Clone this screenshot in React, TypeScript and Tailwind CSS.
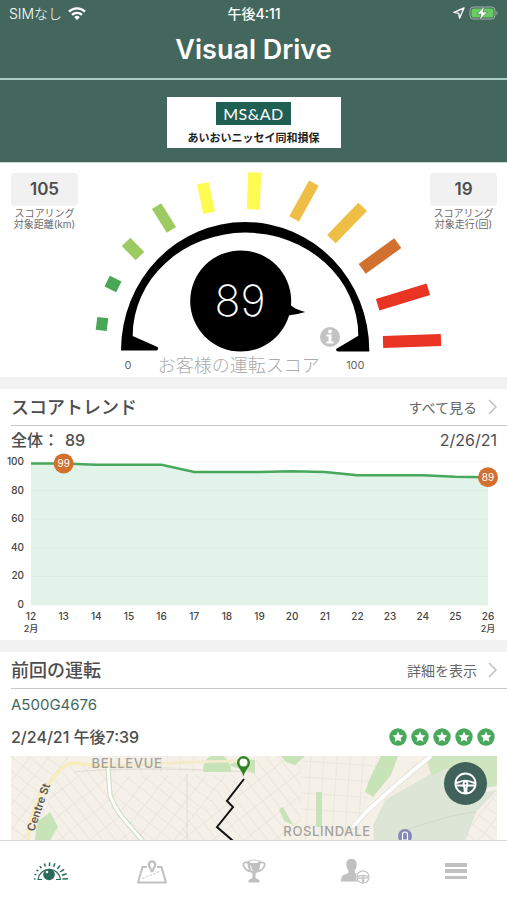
import type { ReactNode } from 'react'

const TICKS = [
  { cx: 102, cy: 324, len: 11, w: 13, rot: 7, color: '#4aa657' },
  { cx: 113, cy: 284, len: 13, w: 12, rot: 26, color: '#4aa657' },
  { cx: 133, cy: 249, len: 20, w: 12, rot: 46, color: '#9dcb62' },
  { cx: 164, cy: 218, len: 28, w: 11, rot: 58, color: '#9dcb62' },
  { cx: 206, cy: 198, len: 30, w: 12, rot: 78, color: '#fdfb52' },
  { cx: 254, cy: 191, len: 37, w: 13, rot: 92, color: '#fdfb52' },
  { cx: 304, cy: 201, len: 41, w: 11, rot: 119, color: '#efbe45' },
  { cx: 347, cy: 223, len: 45, w: 12, rot: 134, color: '#efbe45' },
  { cx: 380, cy: 256, len: 44, w: 12, rot: -36, color: '#d2712f' },
  { cx: 403, cy: 297, len: 53, w: 12, rot: -17, color: '#e93323' },
  { cx: 412, cy: 341, len: 58, w: 12, rot: -2, color: '#e93323' },
]

const TREND = [
  { day: 12, score: 99 },
  { day: 13, score: 99 },
  { day: 14, score: 98 },
  { day: 15, score: 98 },
  { day: 16, score: 98 },
  { day: 17, score: 93 },
  { day: 18, score: 93 },
  { day: 19, score: 93 },
  { day: 20, score: 93.6 },
  { day: 21, score: 93 },
  { day: 22, score: 90.7 },
  { day: 23, score: 90.7 },
  { day: 24, score: 90.7 },
  { day: 25, score: 89.6 },
  { day: 26, score: 89.3 },
]

const CHART = { left: 31, right: 488, top: 10, bottom: 153 }

export default function App() {
  return (
    <div className="flex h-dvh flex-col bg-white font-['Inter','Noto_Sans_CJK_JP',sans-serif] text-[#4d4d4d]">
      <Header />
      <main className="min-h-0 flex-1 overflow-y-auto bg-[#f2f2f2] [scrollbar-width:none]">
        <ScoreSection />
        <TrendSection />
        <LastTripSection />
      </main>
      <TabBar />
    </div>
  )
}

function Header() {
  return (
    <header className="shrink-0 bg-[#44675d] text-white">
      <div className="grid h-[26px] grid-cols-3 items-center pr-2 pl-[9px] text-[14px]">
        <div className="flex items-center gap-1.5 font-light">
          <span>SIMなし</span>
          <svg viewBox="0 0 18 13" className="h-[13px] w-[18px]" fill="none" stroke="#fff" strokeWidth="2.3">
            <path d="M1 4.6a11.5 11.5 0 0 1 16 0" />
            <path d="M4 7.9a7.2 7.2 0 0 1 10 0" />
            <path d="M6.2 10.2 9 13l2.8-2.8a4 4 0 0 0-5.6 0z" fill="#fff" stroke="none" />
          </svg>
        </div>
        <span className="text-center font-medium">午後4:11</span>
        <div className="flex items-center justify-end gap-1">
          <svg viewBox="0 0 12 12" className="h-3 w-3" fill="none" stroke="#fff" strokeWidth="1.4" strokeLinejoin="round">
            <path d="M11 1 1 5.4l4.7.9.9 4.7z" />
          </svg>
          <svg viewBox="0 0 30 14" className="h-[14px] w-[30px]">
            <rect x="1" y="1" width="25" height="12" rx="3.5" fill="none" stroke="#a3b5af" />
            <rect x="2.5" y="2.5" width="22" height="9" rx="2" fill="#65ce5f" />
            <path d="M27.5 5v4c1.6-.5 1.6-3.5 0-4z" fill="#a3b5af" />
            <path d="M15.5 0 8 8h4l-1.500 6 8-8h-4.500z" fill="#fff" stroke="#44675d" strokeWidth=".6" />
          </svg>
        </div>
      </div>
      <h1 className="border-b-2 border-[#a9cdc4] pb-1 text-center text-[27px] leading-[48px] font-semibold">
        Visual Drive
      </h1>
      <div className="border-b border-[#c9dad5] pt-[17px] pb-[14px]">
        <div className="mx-auto flex h-[51px] w-[174px] flex-col items-center bg-white pt-[5px]">
          <div className="bg-[#1f5f54] px-[7px] font-['Lato',sans-serif] text-[16px] leading-[23px] tracking-wide">
            MS&amp;AD
          </div>
          <div className="pt-0.5 text-[11px] leading-[22px] font-bold text-[#222]">あいおいニッセイ同和損保</div>
        </div>
      </div>
    </header>
  )
}

function StatTile({ value, label, unit }: { value: string; label: string; unit: string }) {
  return (
    <div className="w-[67px] text-center">
      <div className="rounded bg-[#f1f1f1] text-[17px] leading-[33px] font-semibold">{value}</div>
      <div className="mt-0.5 text-[10px] leading-[11px] whitespace-nowrap text-[#6b6b6b]">
        {label}
        <br />
        {unit}
      </div>
    </div>
  )
}

function ScoreSection() {
  return (
    <section className="grid bg-white pt-[7px]">
      <div className="col-start-1 row-start-1 mt-[3px] flex items-start justify-between pr-[10px] pl-[11px]">
        <StatTile value="105" label="スコアリング" unit="対象距離(km)" />
        <StatTile value="19" label="スコアリング" unit="対象走行(回)" />
      </div>
      <div className="col-start-1 row-start-1 mx-auto w-full max-w-[390px]">
        <svg viewBox="59 170 390 184" className="w-full" role="img" aria-label="運転スコア 89">
          {TICKS.map((t) => (
            <rect
              key={t.cx}
              x={t.cx - t.len / 2}
              y={t.cy - t.w / 2}
              width={t.len}
              height={t.w}
              fill={t.color}
              transform={`rotate(${t.rot} ${t.cx} ${t.cy})`}
            />
          ))}
          <path d="M121 350.5A124 128.5 0 0 1 369.3 350.500V351.500H338q-3-1-1.500-2.800L358.300 335.700A112 102.500 0 0 0 132.700 336L157.500 347q1.500 2-.5 3.500z" />
          <circle cx="240.700" cy="301" r="50.500" />
          <path d="M290 304.500q5 5 15.300 7.500-8 2.500-17.300 3.500z" />
          <text x="240" y="316" textAnchor="middle" fill="#fff" className="text-[43px] font-extralight">
            89
          </text>
          <circle cx="330" cy="337" r="10" fill="#c3c3c3" />
          <circle cx="330" cy="331.500" r="2" fill="#fff" />
          <path d="M326.500 334.500h5v7h2v2h-7v-2h2v-5h-2z" fill="#fff" />
        </svg>
        <div className="flex h-[23px] items-center justify-between pr-[84px] pl-[66px] text-[11px] text-[#666]">
          <span>0</span>
          <h2 className="text-[18px] leading-[23px] font-light text-[#ababab]">お客様の運転スコア</h2>
          <span>100</span>
        </div>
      </div>
    </section>
  )
}

function SectionHead({ title, link }: { title: string; link: string }) {
  return (
    <div className="ml-[11px] flex h-[37px] items-center justify-between border-b border-[#c8c8c8] pr-[10px]">
      <h2 className="text-[18px] font-medium">{title}</h2>
      <a href="#" className="flex items-center gap-[11px] text-[14px] text-[#666]">
        {link}
        <svg viewBox="0 0 9 16" className="h-4 w-[9px]" fill="none" stroke="#c0c0c4" strokeWidth="1.500">
          <path d="m1 1 7 7-7 7" />
        </svg>
      </a>
    </div>
  )
}

function TrendSection() {
  const step = (CHART.right - CHART.left) / (TREND.length - 1)
  const x = (i: number) => CHART.left + i * step
  const y = (v: number) => CHART.bottom - (v / 100) * (CHART.bottom - CHART.top)
  const line = TREND.map((p, i) => `${x(i)},${y(p.score)}`).join(' ')
  const last = TREND.length - 1

  return (
    <section className="mt-3 bg-white">
      <SectionHead title="スコアトレンド" link="すべて見る" />
      <div className="flex h-[26px] items-end justify-between pr-[10px] pl-[11px] text-[16px] leading-6">
        <div className="flex gap-1.5 font-medium">
          <span>全体：</span>
          <span>89</span>
        </div>
        <span>2/26/21</span>
      </div>
      <svg viewBox="0 0 507 188" className="w-full" role="img" aria-label="スコアトレンドのグラフ">
        <polygon points={`${CHART.left},${CHART.bottom} ${line} ${CHART.right},${CHART.bottom}`} fill="#e2f3e9" />
        {[0, 20, 40, 60, 80, 100].map((v) => (
          <g key={v}>
            <line x1={CHART.left} x2={CHART.right} y1={y(v)} y2={y(v)} stroke="#000" strokeOpacity=".03" />
            <text x="24" y={y(v) + 3} textAnchor="end" fill="#444" className="text-[10px] font-medium">
              {v}
            </text>
          </g>
        ))}
        <polyline points={line} fill="none" stroke="#48a85c" strokeWidth="2.500" />
        {TREND.map((p, i) => (
          <text key={p.day} x={x(i)} y="168" textAnchor="middle" fill="#444" className="text-[10px] font-medium">
            {p.day}
          </text>
        ))}
        {[0, last].map((i) => (
          <text key={i} x={x(i)} y="180" textAnchor="middle" fill="#444" className="text-[9px] font-medium">
            2月
          </text>
        ))}
        {[
          { i: 1, label: '99' },
          { i: last, label: '89' },
        ].map((m) => (
          <g key={m.label}>
            <circle cx={x(m.i)} cy={y(TREND[m.i].score)} r="10" fill="#d2712f" />
            <text x={x(m.i)} y={y(TREND[m.i].score) + 4} textAnchor="middle" fill="#fff" className="text-[10px]">
              {m.label}
            </text>
          </g>
        ))}
      </svg>
    </section>
  )
}

function StarBadge() {
  return (
    <svg viewBox="0 0 18 18" className="h-[18px] w-[18px]">
      <circle cx="9" cy="9" r="8.700" fill="#48a85c" />
      <path
        d="m9 3.500 1.600 3.500 3.900.4-2.900 2.600.8 3.800L9 11.900l-3.400 1.900.8-3.800-2.900-2.600 3.900-.4z"
        fill="#fff"
      />
    </svg>
  )
}

function WheelIcon({ className }: { className: string }) {
  return (
    <svg viewBox="0 0 24 24" className={className} fill="none" stroke="currentColor" strokeWidth="2">
      <circle cx="12" cy="12" r="10.500" />
      <path d="M2 11.500c3-.5 5-2.500 10-2.500s7 2 10 2.500M2.500 14h6c2 0 2.500 1.500 2.500 3.500V22M21.500 14h-6c-2 0-2.500 1.500-2.500 3.500V22" />
      <circle cx="12" cy="12" r="2" />
    </svg>
  )
}

function LastTripSection() {
  return (
    <section className="mt-3 bg-white">
      <SectionHead title="前回の運転" link="詳細を表示" />
      <div className="pr-[10px] pl-[11px]">
        <p className="pt-1 text-[15px] leading-6 text-[#44675d]">A500G4676</p>
        <div className="flex h-[39px] items-center justify-between">
          <span className="text-[16px] font-medium">2/24/21 午後7:39</span>
          <div className="flex gap-1 pr-0.5" role="img" aria-label="5つ星">
            {[1, 2, 3, 4, 5].map((n) => (
              <StarBadge key={n} />
            ))}
          </div>
        </div>
        <div className="relative">
          <TripMap />
          <button
            aria-label="運転"
            className="absolute top-1.5 right-2.5 flex h-[43px] w-[43px] items-center justify-center rounded-full bg-[#40625a] text-white"
          >
            <WheelIcon className="h-[23px] w-[23px]" />
          </button>
        </div>
      </div>
    </section>
  )
}

function TripMap() {
  return (
    <svg viewBox="0 0 486 160" className="w-full bg-[#f5f1e8]" role="img" aria-label="走行ルート">
      <defs>
        <pattern id="streets-a" width="15" height="11" patternUnits="userSpaceOnUse" patternTransform="rotate(38)">
          <path d="M0 0h15M0 0v11" stroke="#e2ddd3" fill="none" />
        </pattern>
        <pattern id="streets-b" width="10" height="19" patternUnits="userSpaceOnUse" patternTransform="rotate(-38)">
          <path d="M0 0h10M0 0v19" stroke="#e2ddd3" fill="none" />
        </pattern>
        <pattern id="streets-c" width="13" height="16" patternUnits="userSpaceOnUse" patternTransform="rotate(4)">
          <path d="M0 0h13M0 0v16" stroke="#e2ddd3" fill="none" />
        </pattern>
      </defs>
      <path d="M0 0h60L38 28 18 160H0z" fill="url(#streets-a)" />
      <path d="M40 26 62 8l37 6 2 26 44 60v60H20z" fill="url(#streets-b)" />
      <path d="M100 20 230 18l-50 45-20 50h-14l-46-60z" fill="url(#streets-a)" />
      <path d="M230 18 170 70v90h120V0h-40z" fill="url(#streets-b)" />
      <path d="M100 0h90v16h-90z" fill="url(#streets-c)" />
      <path d="M290 0h80l-16 50-20 110h-44z" fill="url(#streets-c)" />
      <path d="M486 32 455 84v76h31z" fill="url(#streets-a)" />
      <path d="M62 16q60-6 180 0M150 0v16M176 18v142" stroke="#e0dcd0" fill="none" />

      <g fill="#c9e3b9">
        <path d="M192 16c0-10 4-16 10-16h10c6 4 8 10 8 16z" />
        <path d="m24 84 2-18 13-10 8 15-8 13v12H24z" />
        <path d="M218 9c8-4 14-7 26-5v14c-8-5-18-5-26-9zM270 0h24l-10 9-9-3z" />
        <path d="M370 0h17l-7 19-18 22-8-5 5-14zM305 36h6v35h-6zM268 53l4-2 10 18-9-4z" />
        <path d="M418 0h68v30l-70 10-3-20z" fill="#cfe5c0" />
      </g>
      <path
        d="m415 17 6 3 14-8 40 24 11-2v4l-21 18-10 28v76h-92V84l-1-15 13-27z"
        fill="#dde5d6"
      />
      <path d="M486 34 465 56l-10 28v76h31z" fill="#f5f1e8" />
      <path d="M486 34 465 56l-10 28v76h31z" fill="url(#streets-a)" />
      <path d="M385 29 402 5l14 1 4 12-46 26-6-2z" fill="#f3eee4" />
      <path d="M390 76q50-18 75-20" stroke="#d0dacb" fill="none" />

      <path d="M17 160V84C18 60 28 40 39 26c8-10 14-18 23-19l37 4q70-6 140-6" stroke="#f3ebcb" strokeWidth="3" fill="none" />
      <path d="M17 160V84C18 60 28 40 39 26c8-10 14-18 23-19l37 4" stroke="#f9edb8" strokeWidth="3" fill="none" />
      <path d="M97 11 99 39q4 12 13 23l19 22 40 76" stroke="#c9dcbb" strokeWidth="5" fill="none" />
      <path d="M97 11 99 39q4 12 13 23l19 22 40 76" stroke="#fff" strokeWidth="3" fill="none" />
      <path d="M420 0 385 29 355 56l-13 15" stroke="#dcd8ce" strokeWidth="5" fill="none" />
      <path d="M420 0 385 29 355 56l-13 15" stroke="#fff" strokeWidth="4" fill="none" />

      <text x="116" y="12" textAnchor="middle" fill="#a3a19d" className="text-[13px] font-medium tracking-wider">
        BELLEVUE
      </text>
      <text x="316" y="80" textAnchor="middle" fill="#a3a19d" className="text-[13px] font-medium tracking-wider">
        ROSLINDALE
      </text>
      <text transform="translate(23 76) rotate(-71)" fill="#5a5854" className="text-[11px] font-semibold">
        Centre St
      </text>

      <circle cx="394" cy="80" r="7" fill="#8688b8" />
      <path d="M391.500 84v-5.500a2.500 2.500 0 0 1 5 0V84z" fill="none" stroke="#fff" strokeWidth="1.200" />

      <path d="m233 23-17 22 6 6-16 20 15 13 14 12" stroke="#111" strokeWidth="2" fill="none" />
      <path d="M232.500 20.500C231 14 226 11 226 6.500a6.500 6.500 0 0 1 13 0c0 4.500-5 7.500-6.500 14z" fill="#2f8422" />
      <circle cx="232.500" cy="6.500" r="4" fill="#fff" />
    </svg>
  )
}

const RAYS = [-88, -70, -52, -34, -16, 2, 20, 38, 56, 72, 88]

const TABS: { label: string; active?: boolean; icon: ReactNode }[] = [
  {
    label: 'ホーム',
    active: true,
    icon: (
      <svg viewBox="0 0 36 24" className="h-6 w-9" fill="none" stroke="currentColor">
        <circle cx="16" cy="15.500" r="5.800" fill="currentColor" stroke="none" />
        <circle cx="14" cy="13" r="1.300" fill="#fff" stroke="none" />
        <path d="M9 20.500H5a11.300 11.300 0 0 1 22.500 0H23" strokeWidth="1.200" />
        {RAYS.map((a, i) => (
          <path key={a} d={`M16 7v${-1.5 - i * 0.4}`} strokeWidth="1.500" transform={`rotate(${a} 16 20.500)`} />
        ))}
      </svg>
    ),
  },
  {
    label: '地図',
    icon: (
      <svg viewBox="0 0 32 26" className="h-[26px] w-8" fill="none" stroke="currentColor" strokeWidth="2">
        <path d="M11 9H6.500L2 24.500h28L25.500 9H21" strokeLinejoin="round" />
        <path d="M6 21l6-3 4-1 8-4" strokeWidth=".8" strokeDasharray="3 1" />
        <path d="M16 14c-.5-3-3.200-4.500-3.200-7.500a3.200 3.200 0 0 1 6.400 0c0 3-2.700 4.500-3.200 7.500z" strokeWidth="2.200" />
      </svg>
    ),
  },
  {
    label: 'トロフィー',
    icon: (
      <svg viewBox="0 0 24 26" className="h-[26px] w-6" fill="none" stroke="currentColor" strokeWidth="1.800">
        <path d="M6 4.500C2 4 .8 5 1.500 7.500c.8 3 4 5.500 7 6M18 4.500c4-.5 5.200.5 4.500 3-.8 3-4 5.500-7 6" />
        <path d="M5.500 3c0 7 1.500 10.500 5 12.500v4.500L6.500 22v2.500h11V22l-4-2v-4.500c3.500-2 5-5.500 5-12.500q-6.500-3-13 0z" fill="currentColor" stroke="none" />
        <ellipse cx="12" cy="3.800" rx="4.600" ry="1.200" fill="#fff" stroke="none" />
        <path d="M8.500 7.500q.5 3.500 2 5.500" stroke="#fff" strokeWidth="1" />
      </svg>
    ),
  },
  {
    label: 'ドライバー',
    icon: (
      <div className="relative h-[26px] w-[30px]">
        <svg viewBox="0 0 30 26" className="h-[26px] w-[30px]" fill="currentColor">
          <path d="M11.500 1c3.500 0 5.200 2 5.200 5.500 0 3-1 4.800-2 6v2.500c2 1 5 1.500 6.500 3v5.500H1c0-5.500 1.500-6.500 7.500-8.500v-2.500c-1-1.200-2.200-3-2.200-6C6.300 3 8 1 11.500 1z" />
        </svg>
        <WheelIcon className="absolute right-0 bottom-0 h-3.5 w-3.5 rounded-full bg-white" />
      </div>
    ),
  },
  {
    label: 'メニュー',
    icon: (
      <svg viewBox="0 0 22 18" className="h-[18px] w-[22px]" fill="currentColor">
        <path d="M0 1h22v4H0zM0 7h22v4H0zM0 14h22v3H0z" />
      </svg>
    ),
  },
]

function TabBar() {
  return (
    <nav className="flex h-[60px] shrink-0 border-t border-[#d9d9d9] bg-white">
      {TABS.map((t) => (
        <button
          key={t.label}
          aria-label={t.label}
          className={`flex flex-1 items-center justify-center ${t.active ? 'text-[#2b6b5b]' : 'text-[#c0c0c0]'}`}
        >
          {t.icon}
        </button>
      ))}
    </nav>
  )
}
